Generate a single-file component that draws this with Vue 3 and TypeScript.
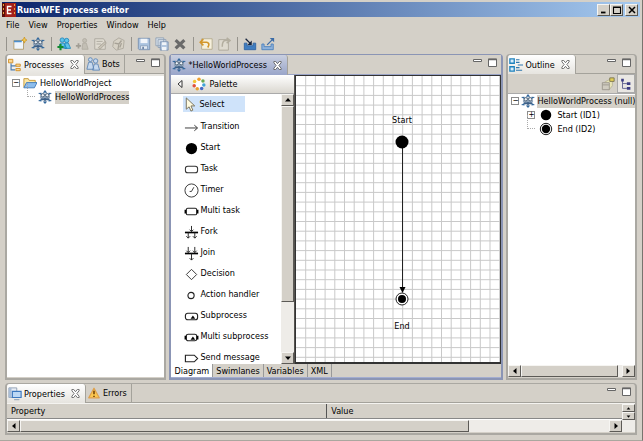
<script setup lang="ts">
import { ref } from 'vue'

interface Tool { icon: string; label: string }

const menus: string[] = ['File', 'View', 'Properties', 'Window', 'Help']

const toolGroups: Tool[][] = [
  [{ icon: 'new', label: 'New' }, { icon: 'process', label: 'New process' }],
  [
    { icon: 'bots-add', label: 'New bot station' },
    { icon: 'bot-add', label: 'New bot' },
    { icon: 'task-add', label: 'New bot task' },
    { icon: 'bot-edit', label: 'Edit bot' },
  ],
  [{ icon: 'save', label: 'Save' }, { icon: 'save-all', label: 'Save all' }, { icon: 'delete', label: 'Delete' }],
  [{ icon: 'undo', label: 'Undo' }, { icon: 'redo', label: 'Redo' }],
  [{ icon: 'import', label: 'Import' }, { icon: 'export', label: 'Export' }],
]

const paletteItems: Tool[] = [
  { icon: 'select', label: 'Select' },
  { icon: 'transition', label: 'Transition' },
  { icon: 'start', label: 'Start' },
  { icon: 'task', label: 'Task' },
  { icon: 'timer', label: 'Timer' },
  { icon: 'multitask', label: 'Multi task' },
  { icon: 'fork', label: 'Fork' },
  { icon: 'join', label: 'Join' },
  { icon: 'decision', label: 'Decision' },
  { icon: 'action', label: 'Action handler' },
  { icon: 'subprocess', label: 'Subprocess' },
  { icon: 'multisub', label: 'Multi subprocess' },
  { icon: 'send', label: 'Send message' },
]
const activeTool = ref('select')

const editorTabs: string[] = ['Diagram', 'Swimlanes', 'Variables', 'XML']
const activeTab = ref('Diagram')

const pitch = 9.7
const gridLines: number[] = Array.from({ length: 200 }, (_, i) => (i + 1) * pitch)
</script>

<template>
  <svg class="defs" aria-hidden="true">
    <defs>
      <symbol id="process" viewBox="0 0 16 16">
        <path d="M4 4h8l2 4-2 4H4L2 8z" fill="#8fa4ba" />
        <path d="M8 0l2.500 3h-5zM8 16l2.500-3h-5zM0 3.500L4 3v3zM16 3.500L12 3v3zM0 12.500l4 .5v-3zM16 12.500l-4 .5v-3z" fill="#33689c" />
        <g fill="#eef4fa" stroke="#45596f"><circle cx="5.500" cy="6" r="1.900" /><circle cx="10.500" cy="6" r="1.900" /></g>
        <path d="M3.500 10.500h9M8 9v4" stroke="#3c5f86" stroke-width="1.600" />
      </symbol>
      <symbol id="new" viewBox="0 0 16 16">
        <path d="M1 4h11v10H1z" fill="#eef5fc" stroke="#b09a68" /><path d="M1 4h9v2H1z" fill="#4c8fce" />
        <path d="M13 0l1 2.500 2 1-2 1-1 2.500-1-2.500-2-1 2-1z" fill="#f6cc4c" stroke="#c48a18" stroke-width=".7" />
      </symbol>
      <symbol id="bots-add" viewBox="0 0 16 16">
        <g fill="#5fc4ea" stroke="#1782bb" stroke-width=".9"><circle cx="6" cy="3.500" r="2.500" /><circle cx="11" cy="4" r="2.500" /><path d="M2 12l2-5h4l3 6zM9 7h4l2.500 6H9z" /></g>
        <path d="M4 8v7M.500 11.500h7" stroke="#138a2f" stroke-width="2.400" />
      </symbol>
      <symbol id="bot-add" viewBox="0 0 16 16">
        <g fill="#c3bfb5" stroke="#aaa69c" stroke-width=".8"><circle cx="11" cy="4" r="2.300" /><path d="M8 14l1-7h4l2 7z" /></g>
        <path d="M4 7v6M1 10h6" stroke="#a19d94" stroke-width="2" />
      </symbol>
      <symbol id="task-add" viewBox="0 0 16 16">
        <path d="M2 2h10l2 3v9H2z" fill="#dedad0" stroke="#aaa69c" /><path d="M4 5h7M4 8h5" stroke="#aaa69c" />
        <path d="M6 12l8-7 1 2-7 7z" fill="#c8c3b6" stroke="#a9a498" />
      </symbol>
      <symbol id="bot-edit" viewBox="0 0 16 16">
        <path d="M3 5l6-4 6 3-1 9-8 2-4-4z" fill="#d6d1c5" stroke="#aca79c" /><path d="M4 7l5 1 3-4M9 8l-1 6M12 7l-2 5" fill="none" stroke="#a6a196" stroke-width="1.500" />
      </symbol>
      <symbol id="save" viewBox="0 0 16 16">
        <path d="M1.500 1.500h13v13h-12l-1-1z" fill="#a9c2df" stroke="#7890b0" /><path d="M4 2h8v5H4z" fill="#f1f5fa" /><path d="M4 10h8v4H4z" fill="#e4ebf3" stroke="#8096b3" stroke-width=".8" /><path d="M6 11h2v3H6z" fill="#6e86a8" />
      </symbol>
      <symbol id="save-all" viewBox="0 0 16 16">
        <path d="M1 1h9v9H1zM3.500 3h9v9h-9z" fill="#d7e0ea" stroke="#8fa0b5" />
        <path d="M6 5.500h9V15H6z" fill="#b2c6de" stroke="#7890b0" /><path d="M8 6h5v3H8zM8 11.500h5V15H8z" fill="#f0f4f8" />
      </symbol>
      <symbol id="delete" viewBox="0 0 16 16">
        <path d="M3 3.500l10 9.500M13 3.500L3 13" stroke="#6a6a6a" stroke-width="3.600" />
      </symbol>
      <symbol id="undo" viewBox="0 0 16 16">
        <path d="M3 2h12v12H3z" fill="#f6f0dc" stroke="#b3a98d" />
        <path d="M5 2.500L1.500 6 5 9.500M2.500 6H9q4 1 1 6" fill="none" stroke="#d3962a" stroke-width="1.900" />
      </symbol>
      <symbol id="redo" viewBox="0 0 16 16">
        <path d="M2 3h11v12H2z" fill="#dedacf" stroke="#aaa598" />
        <path d="M11 1l4 3-4 3M14 4H9Q6 5 6 11" fill="none" stroke="#b3ae9f" stroke-width="1.700" />
      </symbol>
      <symbol id="import" viewBox="0 0 16 16">
        <path d="M1.500 7v7.500h13V7h-3v3h-7V7z" fill="#3f7dc0" stroke="#2f64a4" />
        <path d="M3 2l5 5" stroke="#16233c" stroke-width="1.500" /><path d="M10 4v5H5z" fill="#16233c" />
      </symbol>
      <symbol id="export" viewBox="0 0 16 16">
        <path d="M1 8v6.500h13V8h-2.500v3h-8V8z" fill="#8eb2dc" stroke="#4a80bd" />
        <path d="M7 9l6-6" stroke="#3c6ca6" stroke-width="1.400" /><path d="M10 1h5v5z" fill="#3c6ca6" />
      </symbol>
      <symbol id="tree" viewBox="0 0 16 16">
        <path d="M3.500 6v7.500H8M3.500 9H9" fill="none" stroke="#4d7db0" stroke-width="1.300" />
        <path d="M.5 1.500h5v4h-5zM9 7h5v2.500H9zM9 12h5v2.500H9z" fill="#fbd792" stroke="#d08c22" />
      </symbol>
      <symbol id="bots" viewBox="0 0 16 16">
        <g fill="#c6d9ee" stroke="#5e86b6"><circle cx="5" cy="3" r="2.200" /><circle cx="11" cy="4.500" r="2.500" /><path d="M1 14l2-8h4l2 8zM7.500 15l2-7h4l2 7z" /></g>
      </symbol>
      <symbol id="folder" viewBox="0 0 16 16">
        <path d="M1 13V3h5l1 2h7v3" fill="#fbe7a6" stroke="#c2922e" /><path d="M1 13.500l3-6h12l-3 6z" fill="#8dbdec" stroke="#3f79b8" />
      </symbol>
      <symbol id="palette" viewBox="0 0 16 16">
        <circle cx="8" cy="8" r="6" fill="#fff" />
        <circle cx="8" cy="2.500" r="2" fill="#f0a030" /><circle cx="12.500" cy="4.500" r="2" fill="#6aa84f" /><circle cx="13.500" cy="9" r="2" fill="#41a4d8" />
        <circle cx="11" cy="13" r="2" fill="#4668c4" /><circle cx="6" cy="13.500" r="2" fill="#e8a030" /><circle cx="2.500" cy="10" r="2" fill="#e0503c" /><circle cx="3" cy="5" r="2" fill="#f4c531" />
      </symbol>
      <symbol id="outline" viewBox="0 0 16 16">
        <path d="M1 1h5v5H1zM1 10h5v5H1z" fill="#d8ecfa" stroke="#1f82bd" stroke-width="1.500" /><path d="M8 2h4M8 5h4M10 8h6M8 11h4M8 14h7" stroke="#2f77ad" stroke-width="1.300" />
      </symbol>
      <symbol id="props" viewBox="0 0 16 16">
        <path d="M1 1h9v11H1z" fill="#e9eef5" stroke="#8c9bb0" /><path d="M1 1h3v11H1z" fill="#a9bdd6" /><path d="M5 5h10v7H5z" fill="#bcd8f5" stroke="#3c78be" stroke-width="1.300" /><path d="M7 14.500h6" stroke="#7c91ad" />
      </symbol>
      <symbol id="warn" viewBox="0 0 16 16">
        <path d="M8 2.500L14 13.500H2z" fill="#fbc850" stroke="#dfa04a" stroke-width="1.400" stroke-linejoin="round" /><path d="M8 5.500v4M8 11v1.600" stroke="#6b3a00" stroke-width="1.700" />
      </symbol>
      <symbol id="close" viewBox="0 0 10 10">
        <path d="M1 .5h2l2 2.500 2-2.500h2V2L6.500 5 9 8v1.500H7L5 7 3 9.500H1V8l2.500-3L1 2z" fill="#fff" stroke="#555" stroke-width=".9" />
      </symbol>
      <symbol id="thumbs" viewBox="0 0 16 16">
        <path d="M4 6l9-5v9l-4 5" fill="#e9e6b8" stroke="#b9b598" /><path d="M1.500 6.500h8v8h-8z" fill="#d0ccc0" stroke="#98948a" /><path d="M2 9h7" stroke="#98948a" /><path d="M10 1h5v4h-5z" fill="#e3cf55" stroke="#77724e" />
      </symbol>
      <symbol id="hier" viewBox="0 0 16 16">
        <path d="M4 3v10h5M4 7.500h5" fill="none" stroke="#5b5b8a" /><path d="M2.500 2h3v3h-3zM9 6h4v3H9zM9 11.500h4v3H9z" fill="#3c3c82" />
      </symbol>

      <symbol id="select" viewBox="0 0 16 16"><path d="M3.500 1v12l3-2.500 2 4.500 2-1-2-4.500h4z" fill="#fffbe0" stroke="#77705a" /></symbol>
      <symbol id="transition" viewBox="0 0 16 16"><path d="M1 8.500h13M11 5.500l3.500 3-3.500 3" fill="none" stroke="#333" /></symbol>
      <symbol id="start" viewBox="0 0 16 16"><circle cx="8" cy="8" r="6" /></symbol>
      <symbol id="end" viewBox="0 0 16 16"><circle cx="8" cy="8" r="6.500" fill="#fff" stroke="#000" /><circle cx="8" cy="8" r="4.800" /></symbol>
      <symbol id="task" viewBox="0 0 16 16"><rect x="1.500" y="4.500" width="13" height="7" rx="2.500" fill="#fff" stroke="#333" stroke-width="1.100" /></symbol>
      <symbol id="timer" viewBox="0 0 16 16"><circle cx="8" cy="8" r="7" fill="#fff" stroke="#333" /><path d="M10.500 4.500L8 9H6" fill="none" stroke="#333" /></symbol>
      <symbol id="multitask" viewBox="0 0 16 16"><rect x="2.500" y="4.500" width="11" height="7" rx="1.500" fill="#fff" stroke="#222" stroke-width="1.100" /><path d="M1.500 6v4M14.500 6v4" stroke="#000" stroke-width="1.800" /></symbol>
      <symbol id="fork" viewBox="0 0 16 16"><path d="M1 8h14" stroke="#000" stroke-width="1.800" /><path d="M8 1v6M6 5l2 2 2-2M4.500 8v6M11.500 8v6M2.500 12l2 2 2-2M9.500 12l2 2 2-2" fill="none" stroke="#222" /></symbol>
      <symbol id="join" viewBox="0 0 16 16"><path d="M1 8h14" stroke="#000" stroke-width="1.800" /><path d="M8 8v7M6 13l2 2 2-2M4.500 1v6M11.500 1v6M2.500 5l2 2 2-2M9.500 5l2 2 2-2" fill="none" stroke="#222" /></symbol>
      <symbol id="decision" viewBox="0 0 16 16"><path d="M8 2.500L13.500 8 8 13.500 2.500 8z" fill="#fff" stroke="#333" /></symbol>
      <symbol id="action" viewBox="0 0 16 16"><circle cx="7.500" cy="8" r="3.300" fill="#fff" stroke="#222" stroke-width="1.200" /></symbol>
      <symbol id="subprocess" viewBox="0 0 16 16"><rect x="1.500" y="4.500" width="13" height="7" rx="2.500" fill="#fff" stroke="#222" stroke-width="1.200" /><path d="M7 10.500l2.500-3.500 2.500 3.500z" /></symbol>
      <symbol id="multisub" viewBox="0 0 16 16"><rect x="2.500" y="4.500" width="11" height="7" rx="2" fill="#fff" stroke="#222" stroke-width="1.200" /><path d="M7 10.500l2.500-3.500 2.500 3.500z" /><path d="M1.500 6v4M14.500 6v4" stroke="#000" stroke-width="1.800" /></symbol>
      <symbol id="send" viewBox="0 0 16 16"><path d="M1.500 4.500h9.500l3.500 3.500-3.500 3.500H1.500z" fill="#fff" stroke="#222" stroke-width="1.200" /></symbol>
      <symbol id="left" viewBox="0 0 8 8"><path d="M5.500 1v6L2 4z" /></symbol>
      <symbol id="right" viewBox="0 0 8 8"><path d="M2.500 1v6L6 4z" /></symbol>
      <symbol id="up" viewBox="0 0 8 8"><path d="M1 5.500h6L4 2z" /></symbol>
      <symbol id="down" viewBox="0 0 8 8"><path d="M1 2.500h6L4 6z" /></symbol>
      <symbol id="min" viewBox="0 0 9 9"><path d="M.5 1.500h8v2h-8z" fill="#fff" stroke="#666" /></symbol>
      <symbol id="max" viewBox="0 0 9 9"><path d="M.5 1h8v7.500h-8z" fill="#fff" stroke="#666" /><path d="M0 1.500h9" stroke="#666" stroke-width="1.500" /></symbol>
    </defs>
  </svg>

  <div class="window">
    <header class="titlebar">
      <svg class="logo" viewBox="0 0 14 14" aria-hidden="true">
        <path d="M0 0h14v14H0z" fill="#a3211a" /><path d="M0 0h3v14H0z" fill="#5b0d0a" />
        <path d="M1.500 1v2M1.500 5v2M1.500 9v2M12.500 1v2M12.500 5v2M12.500 9v2" stroke="#e7a13c" />
        <path d="M9.500 3.500H5.500v7h4M5.500 7H9" fill="none" stroke="#fff" stroke-width="1.400" />
      </svg>
      <h1>RunaWFE process editor</h1>
      <div class="winbtns">
        <button type="button" aria-label="Minimize"><svg viewBox="0 0 10 8"><path d="M2 6.500h4.500" stroke="#000" stroke-width="1.800" /></svg></button>
        <button type="button" aria-label="Maximize"><svg viewBox="0 0 10 8"><path d="M1.500 1h7v6.500h-7zM1.500 1.500h7" fill="none" stroke="#000" stroke-width="1.100" /></svg></button>
        <button type="button" aria-label="Close" class="x"><svg viewBox="0 0 10 8"><path d="M2 1l6 6M8 1L2 7" stroke="#000" stroke-width="1.500" /></svg></button>
      </div>
    </header>

    <nav class="menubar">
      <button v-for="m in menus" :key="m" type="button">{{ m }}</button>
    </nav>

    <div class="toolbar" role="toolbar" aria-label="Main">
      <div v-for="(group, g) in toolGroups" :key="g" class="tools">
        <button v-for="t in group" :key="t.icon" type="button" :aria-label="t.label">
          <svg class="ic"><use :href="'#' + t.icon" /></svg>
        </button>
      </div>
    </div>

    <main class="work">
      <section class="panel processes">
        <div class="tabs">
          <button type="button" class="tab on"><svg class="ic"><use href="#tree" /></svg>Processes<svg class="cl"><use href="#close" /></svg></button>
          <button type="button" class="tab"><svg class="ic"><use href="#bots" /></svg>Bots</button>
          <div class="mm"><svg><use href="#min" /></svg><svg><use href="#max" /></svg></div>
        </div>
        <div class="strip"></div>
        <ul class="tree">
          <li class="row"><span class="box">−</span><svg class="ic"><use href="#folder" /></svg><span class="name">HelloWorldProject</span></li>
          <li class="row child"><span class="elbow"></span><svg class="ic"><use href="#process" /></svg><span class="name sel">HelloWorldProcess</span></li>
        </ul>
      </section>

      <section class="panel editor">
        <div class="tabs">
          <button type="button" class="tab on"><svg class="ic"><use href="#process" /></svg>*HelloWorldProcess<svg class="cl"><use href="#close" /></svg></button>
          <div class="mm"><svg><use href="#min" /></svg><svg><use href="#max" /></svg></div>
        </div>
        <div class="sheet">
          <aside class="palette">
            <div class="palhead">
              <svg class="fold" viewBox="0 0 6 8"><path d="M5 .5v7L1 4z" fill="#fff" stroke="#333" /></svg>
              <svg class="ic"><use href="#palette" /></svg>Palette
            </div>
            <div class="palbody">
              <div class="items">
                <button v-for="p in paletteItems" :key="p.icon" type="button" :class="{ active: activeTool === p.icon }" @click="activeTool = p.icon">
                  <svg class="pic"><use :href="'#' + p.icon" /></svg><span>{{ p.label }}</span>
                </button>
              </div>
              <div class="vbar">
                <button type="button" aria-label="Scroll up"><svg><use href="#up" /></svg></button>
                <div class="thumb"></div>
                <div class="rest"></div>
                <button type="button" aria-label="Scroll down"><svg><use href="#down" /></svg></button>
              </div>
            </div>
          </aside>
          <div class="canvas">
            <svg class="diagram">
              <g stroke="#c9c9c9">
                <line v-for="x in gridLines" :key="'v' + x" :x1="x" :x2="x" y1="0" y2="2000" />
                <line v-for="y in gridLines" :key="'h' + y" :y1="y" :y2="y" x1="0" x2="2000" />
              </g>
              <path d="M106.500 66v150" stroke="#222" />
              <path d="M103.500 211h6l-3 6z" />
              <circle cx="106" cy="66" r="6.500" />
              <circle cx="106" cy="223" r="6" fill="#fff" stroke="#222" /><circle cx="106" cy="223" r="4" />
              <text x="106" y="47" text-anchor="middle">Start</text>
              <text x="106" y="253" text-anchor="middle">End</text>
            </svg>
          </div>
        </div>
        <div class="pages">
          <button v-for="t in editorTabs" :key="t" type="button" :class="{ current: activeTab === t }" @click="activeTab = t">{{ t }}</button>
        </div>
      </section>

      <section class="panel outline">
        <div class="tabs">
          <button type="button" class="tab on"><svg class="ic"><use href="#outline" /></svg>Outline<svg class="cl"><use href="#close" /></svg></button>
          <div class="mm"><svg><use href="#min" /></svg><svg><use href="#max" /></svg></div>
        </div>
        <div class="minibar">
          <button type="button" aria-label="Thumbnail"><svg class="ic"><use href="#thumbs" /></svg></button>
          <button type="button" aria-label="Hierarchy" class="down"><svg class="ic"><use href="#hier" /></svg></button>
        </div>
        <ul class="tree">
          <li class="row"><span class="box">−</span><svg class="ic"><use href="#process" /></svg><span class="name sel">HelloWorldProcess (null)</span></li>
          <li class="row sub"><span class="box">+</span><svg class="ic"><use href="#start" /></svg><span class="name">Start (ID1)</span></li>
          <li class="row sub"><span class="elbow"></span><svg class="ic"><use href="#end" /></svg><span class="name">End (ID2)</span></li>
        </ul>
        <div class="hbar">
          <button type="button" aria-label="Scroll left"><svg><use href="#left" /></svg></button>
          <div class="thumb"></div><div class="rest"></div>
          <button type="button" aria-label="Scroll right"><svg><use href="#right" /></svg></button>
        </div>
      </section>
    </main>

    <section class="panel bottom">
      <div class="tabs">
        <button type="button" class="tab on"><svg class="ic"><use href="#props" /></svg>Properties<svg class="cl"><use href="#close" /></svg></button>
        <button type="button" class="tab"><svg class="ic"><use href="#warn" /></svg>Errors</button>
        <div class="mm"><svg><use href="#min" /></svg><svg><use href="#max" /></svg></div>
      </div>
      <div class="gridrow">
        <table><thead><tr><th scope="col">Property</th><th scope="col">Value</th></tr></thead></table>
        <div class="spin">
          <button type="button" aria-label="Up"><svg><use href="#up" /></svg></button>
          <button type="button" aria-label="Down"><svg><use href="#down" /></svg></button>
        </div>
      </div>
      <div class="hbar">
        <button type="button" aria-label="Scroll left"><svg><use href="#left" /></svg></button>
        <div class="thumb"></div><div class="rest"></div>
        <button type="button" aria-label="Scroll right"><svg><use href="#right" /></svg></button>
      </div>
    </section>
  </div>
</template>

<style>
body { margin: 0; background: #d4d0c8; }
</style>

<style scoped>
.defs { position: absolute; width: 0; height: 0; }
.window {
  box-sizing: border-box; height: 100vh; display: flex; flex-direction: column;
  padding: 2px 2px 5px; background: #d4d0c8; color: #000;
  border-right: 1px solid #77746e; border-bottom: 1px solid #aaa79f;
  font: 9px/12px "DejaVu Sans Condensed", "DejaVu Sans", sans-serif;
}
button { font: inherit; color: inherit; border: 0; padding: 0; margin: 0; background: none; display: flex; align-items: center; justify-content: center; white-space: nowrap; }
svg { display: block; flex: none; }
.ic { width: 14px; height: 14px; }
.cl { width: 9px; height: 9px; }

.titlebar { display: flex; align-items: center; height: 15px; background: linear-gradient(90deg, #0a246a, #a6caf0); padding-right: 2px; }
.logo { width: 14px; height: 14px; }
h1 { flex: 1; margin: 0; padding-left: 1px; font-size: 9px; line-height: 14px; color: #fff; }
.winbtns { display: flex; }
.winbtns button, .vbar button, .hbar button, .spin button, .thumb {
  box-sizing: border-box; background: #d4d0c8; border: 1px solid; border-color: #f6f5f2 #5c5a56 #5c5a56 #f6f5f2;
}
.winbtns button { width: 13px; height: 12px; }
.winbtns svg { width: 10px; height: 8px; }
.winbtns .x { margin-left: 2px; }

.menubar { display: flex; gap: 9px; height: 16px; padding-left: 4px; }
.toolbar { box-sizing: border-box; display: flex; align-items: center; height: 21px; padding: 1px 0 0 4px; }
.tools { display: flex; height: 16px; }
.tools button { width: 18px; }
.tools::before { content: ""; width: 1px; margin: 1px 3px 1px 4px; background: #96938c; }
.tools:first-child::before { margin: 1px 4px 1px 0; }

.work { flex: 1; display: grid; grid-template-columns: 162fr 335fr 131fr; grid-template-rows: minmax(0, 1fr); gap: 3px; padding: 0 3px; min-height: 0; }
.panel { box-sizing: border-box; display: flex; flex-direction: column; min-width: 0; border: 2px solid #aaa8a2; border-width: 1px 2px 2px; border-radius: 4px 4px 0 0; padding-bottom: 1px; background: #d4d0c8; }
.tabs { display: flex; height: 18px; border-bottom: 1px solid #a4a29b; }
.tab { gap: 2px; padding: 0 4px 0 1px; border-right: 1px solid #a4a29b; }
.tab .cl { margin: 0 1px 0 4px; }
.tab.on { background: linear-gradient(#fff, #e6e4df); margin-bottom: -1px; border-radius: 3px 3px 0 0; }
.mm { display: flex; gap: 6px; margin-left: auto; padding: 3px 4px 0 0; }
.mm svg { width: 9px; height: 9px; }
.strip { height: 2px; background: #e6e4df; }

.tree { flex: 1; list-style: none; margin: 0; padding: 0 0 0 5px; background: #fff; overflow: hidden; }
.row { display: flex; align-items: center; height: 14px; gap: 3px; }
.box { box-sizing: border-box; flex: none; width: 8px; height: 8px; border: 1px solid #8c8c8c; font-size: 8px; line-height: 6px; text-align: center; }
.name { line-height: 13px; white-space: nowrap; }
.sel { background: #d4d0c8; }
.elbow { box-sizing: border-box; flex: none; width: 8px; height: 14px; border-left: 1px dotted #aaa; border-bottom: 1px dotted #aaa; margin-bottom: 14px; }
.child { padding-left: 15px; }

.editor { border-color: #8b95b5; background: #a3add0; }
.editor .tabs { background: #d4d0c8; height: 19px; border-color: #9aa4c6; }
.editor .tab.on { background: linear-gradient(#c9cfe0, #99a5c9); }
.sheet { flex: 1; display: flex; min-height: 0; }
.palette { flex: none; width: 123px; display: flex; flex-direction: column; background: #fff; border-right: 1px solid #55534f; }
.palhead { display: flex; align-items: center; gap: 3px; height: 18px; padding-left: 6px; background: linear-gradient(#fff, #dad7d0); border-bottom: 1px solid #aaa; }
.fold { width: 6px; height: 8px; margin-right: 6px; }
.palbody { flex: 1; display: flex; min-height: 0; }
.items { flex: 1; min-width: 0; overflow: hidden; }
.items button { height: 21px; gap: 1px; padding-left: 13px; }
.items button .pic { width: 15px; height: 15px; }
.items span { line-height: 13px; padding-bottom: 2px; }
.items .active { width: 62px; height: 16px; margin: 2px 0 5px 12px; padding-left: 0; justify-content: flex-start; background: #cfe3fa; }
.items .active span { padding-bottom: 0; }
.vbar { width: 13px; display: flex; flex-direction: column; background: #eeece8; }
.vbar button, .hbar button { width: 13px; height: 12px; flex: none; }
.vbar svg, .hbar svg { width: 8px; height: 8px; }
.vbar .thumb { flex: 195; }
.vbar .rest { flex: 50; }
.canvas { flex: 1; min-width: 0; background: #fff; border: 1px solid #333; border-width: 1px 1px 2px 1px; overflow: hidden; }
.diagram { width: 100%; height: 100%; }
.diagram text { font-size: 9px; }
.pages { display: flex; height: 13px; background: #d4d0c8; }
.pages button { padding: 0 3px; border-right: 1px solid #999; }
.pages .current { background: #fff; }

.minibar { display: flex; justify-content: flex-end; height: 19px; border-bottom: 1px solid #aaa; }
.minibar button { width: 18px; }
.minibar .down { border: 1px solid #aaa; background: #e9e7e3; }
.hbar { display: flex; height: 12px; background: #eeece8; }
.outline .tree { padding-left: 3px; }
.outline .row { gap: 2px; }
.outline .sub { gap: 4px; padding-left: 16px; }
.outline .thumb { flex: 96; }
.outline .rest { flex: 4; }

.bottom { margin: 3px 3px 0; flex: none; }
.gridrow { display: flex; height: 15px; border-top: 1px solid #f4f3f0; border-bottom: 1px solid #fff; }
table { flex: 1; border-collapse: collapse; table-layout: fixed; }
th { font-weight: normal; text-align: left; padding: 0 4px; border-bottom: 1px solid #888; }
th:first-child { width: 52%; border-right: 1px solid #555; }
.spin { width: 13px; }
.spin button { width: 13px; height: 8px; }
.spin svg { width: 5px; height: 5px; }
.bottom .hbar { padding-right: 13px; }
.bottom .thumb { flex: 449; }
.bottom .rest { flex: 140; }
</style>
